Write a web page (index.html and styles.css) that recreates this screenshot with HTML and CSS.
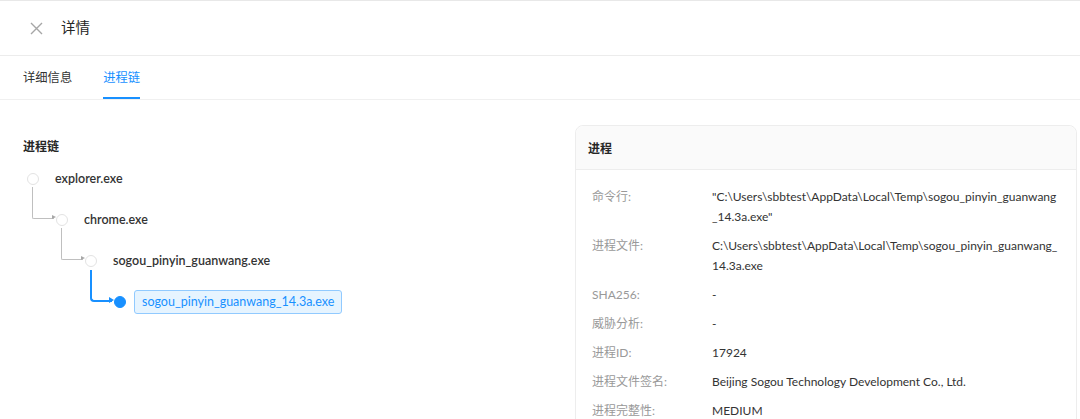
FILE: index.html
```html
<!DOCTYPE html>
<html lang="zh-CN">
<head>
<meta charset="utf-8">
<title>详情</title>
<link rel="stylesheet" href="styles.css">
</head>
<body>
<div class="drawer">
  <header class="drawer-header">
    <span class="close-btn" aria-label="关闭">
      <svg width="13" height="13" viewBox="0 0 13 13"><path d="M1 1L12 12M12 1L1 12" stroke="#a6a6a6" stroke-width="1.4" fill="none"/></svg>
    </span>
    <span class="drawer-title">详情</span>
  </header>
  <nav class="tabs">
    <span class="tab">详细信息</span>
    <span class="tab active">进程链</span>
  </nav>
  <main class="content">
    <section class="chain">
      <h3 class="section-title">进程链</h3>
      <ul class="tree">
        <li class="node lv0"><span class="dot"></span><span class="label">explorer.exe</span></li>
        <li class="node lv1 child"><span class="dot"></span><span class="label">chrome.exe</span></li>
        <li class="node lv2 child"><span class="dot"></span><span class="label">sogou_pinyin_guanwang.exe</span></li>
        <li class="node lv3 child current"><span class="dot"></span><span class="label">sogou_pinyin_guanwang_14.3a.exe</span></li>
      </ul>
    </section>
    <aside class="card">
      <div class="card-head">进程</div>
      <dl class="card-body">
        <div class="row"><dt>命令行:</dt><dd class="path">"C:\Users\sbbtest\AppData\Local\Temp\sogou_pinyin_guanwang<wbr>_14.3a.exe"</dd></div>
        <div class="row"><dt>进程文件:</dt><dd class="path">C:\Users\sbbtest\AppData\Local\Temp\sogou_pinyin_guanwang_<wbr>14.3a.exe</dd></div>
        <div class="row"><dt>SHA256:</dt><dd>-</dd></div>
        <div class="row"><dt>威胁分析:</dt><dd>-</dd></div>
        <div class="row"><dt>进程ID:</dt><dd>17924</dd></div>
        <div class="row"><dt>进程文件签名:</dt><dd>Beijing Sogou Technology Development Co., Ltd.</dd></div>
        <div class="row"><dt>进程完整性:</dt><dd>MEDIUM</dd></div>
      </dl>
    </aside>
  </main>
</div>
</body>
</html>
```

FILE: styles.css
```css
* { box-sizing: border-box; }
html, body { margin: 0; padding: 0; background: #fff; }
body {
  font-family: Lato, "Noto Sans CJK SC", sans-serif;
  color: #333;
  font-size: 12px;
  overflow: hidden;
  height: 419px;
}
.drawer { border-top: 1px solid #e8e8e8; height: 419px; overflow: hidden; }
.drawer-header {
  height: 55px;
  display: flex;
  align-items: center;
  padding-left: 30px;
  border-bottom: 1px solid #ececec;
}
.close-btn { display: flex; width: 13px; height: 13px; margin-right: 18px; }
.drawer-title { font-size: 14.5px; color: #262626; line-height: 20px; }
.tabs {
  display: flex;
  gap: 31px;
  padding-left: 23px;
  border-bottom: 1px solid #f0f0f0;
  height: 44px;
}
.tab {
  height: 43px;
  padding-top: 14px;
  line-height: 16px;
  font-size: 12.3px;
  color: #333;
  border-bottom: 2px solid transparent;
}
.tab.active { color: #1890ff; border-bottom-color: #1890ff; }
.content {
  display: flex;
  justify-content: space-between;
  padding: 25px 3px 0 23px;
}
.chain { flex: 1; padding-top: 12px; }
.section-title {
  margin: 0 0 1px;
  font-size: 12px;
  line-height: 20px;
  font-weight: 700;
  color: #262626;
}
.tree { list-style: none; margin: 0; padding: 0; }
.node {
  position: relative;
  height: 41px;
  display: flex;
  align-items: center;
  padding-left: 4px;
}
.node.lv1 { padding-left: 33px; }
.node.lv2 { padding-left: 62px; }
.node.lv3 { padding-left: 91px; }
.dot {
  width: 12px; height: 12px;
  border-radius: 50%;
  border: 1px solid #e3e3e3;
  background: #fff;
  flex: none;
}
.label {
  margin-left: 16px;
  font-size: 12.5px;
  color: #333;
  font-weight: 600;
  line-height: 20px;
}
.child::before {
  content: "";
  position: absolute;
  top: -12px;
  height: 31px;
  width: 21px;
  border-left: 1px solid #bfbfbf;
  border-bottom: 1px solid #bfbfbf;
  border-bottom-left-radius: 2px;
}
.child::after {
  content: "";
  position: absolute;
  top: 16px;
  border-left: 4px solid #a8a8a8;
  border-top: 2.5px solid transparent;
  border-bottom: 2.5px solid transparent;
}
.lv1::before { left: 9px; }
.lv1::after { left: 29px; }
.lv2::before { left: 38px; }
.lv2::after { left: 58px; }
.lv3::before { left: 67px; border-color: #1890ff; border-width: 0 0 2px 2px; border-bottom-left-radius: 4px; top: -11px; height: 30px; width: 20px; }
.lv3::after { left: 86px; top: 15.5px; border-left: 5px solid #1890ff; border-top-width: 3.5px; border-bottom-width: 3.5px; }
.current .dot { background: #1890ff; border-color: #1890ff; }
.current .label {
  margin-left: 8px;
  padding: 0 7px 0 7px;
  height: 24px;
  line-height: 22px;
  background: #e6f4ff;
  border: 1px solid #91caff;
  border-radius: 3px;
  color: #1890ff;
  font-weight: 400;
}
.card {
  width: 502px;
  flex: none;
  border: 1px solid #ededed;
  border-radius: 8px;
  height: 320px;
}
.card-head {
  height: 44px;
  background: #fafafa;
  border-bottom: 1px solid #ededed;
  border-radius: 8px 8px 0 0;
  padding-left: 12px;
  display: flex;
  align-items: center;
  font-weight: 700;
  font-size: 12px;
  color: #262626;
}
.card-body { margin: 0; padding: 17px 20px 0 16px; }
.row { display: flex; margin-bottom: 9px; line-height: 20px; }
.row dt { width: 120px; flex: none; color: #999; }
.row dd { margin: 0; width: 356px; color: #333; }
.row dd.path { word-break: normal; overflow-wrap: normal; }
```
